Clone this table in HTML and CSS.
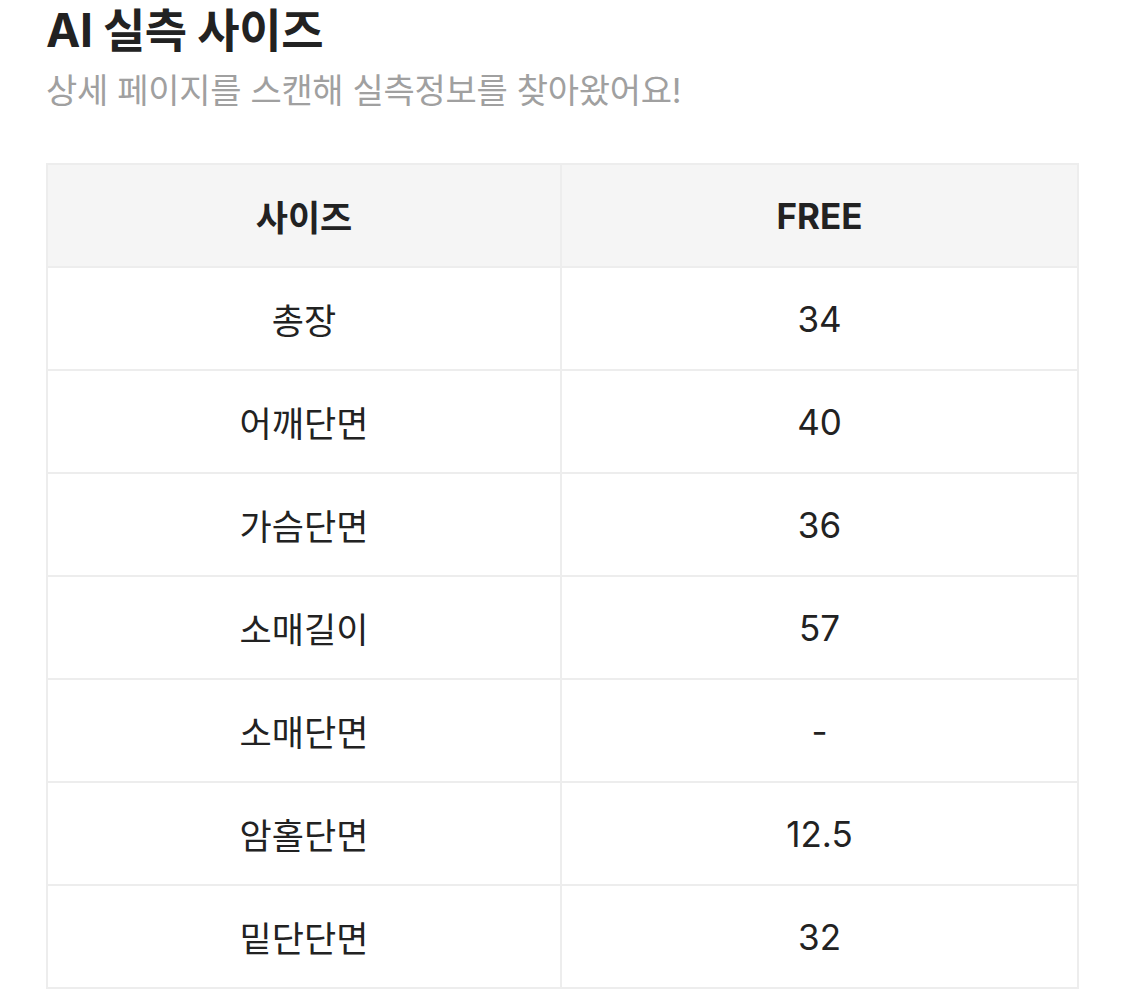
FILE: index.html
```html
<!DOCTYPE html>
<html lang="ko">
<head>
<meta charset="utf-8">
<link rel="stylesheet" href="styles.css">
</head>
<body>
<div class="page">
  <h1 class="title">AI 실측 사이즈</h1>
  <p class="subtitle">상세 페이지를 스캔해 실측정보를 찾아왔어요!</p>
  <table class="size-table">
    <colgroup>
      <col class="col-label">
      <col class="col-value">
    </colgroup>
    <thead>
      <tr><th>사이즈</th><th>FREE</th></tr>
    </thead>
    <tbody>
      <tr><td>총장</td><td>34</td></tr>
      <tr><td>어깨단면</td><td>40</td></tr>
      <tr><td>가슴단면</td><td>36</td></tr>
      <tr><td>소매길이</td><td>57</td></tr>
      <tr><td>소매단면</td><td>-</td></tr>
      <tr><td>암홀단면</td><td>12.5</td></tr>
      <tr><td>밑단단면</td><td>32</td></tr>
    </tbody>
  </table>
</div>
</body>
</html>
```

FILE: styles.css
```css
html, body {
  margin: 0;
  padding: 0;
  background: #ffffff;
}
body {
  font-family: "Inter", "Noto Sans CJK KR", sans-serif;
  color: #222222;
}
.page {
  padding: 2px 46px 0 46px;
}
.title {
  margin: 0;
  font-size: 46px;
  line-height: 56px;
  font-weight: 700;
  letter-spacing: -0.4px;
  color: #222222;
}
.subtitle {
  margin: 12px 0 0 0;
  font-size: 34px;
  line-height: 42px;
  font-weight: 400;
  letter-spacing: -0.3px;
  color: #a0a0a0;
}
.size-table {
  margin-top: 51px;
  width: 1033px;
  border-collapse: collapse;
  table-layout: fixed;
  border: 2px solid #ededed;
}
.col-label {
  width: 514px;
}
.size-table th,
.size-table td {
  border: 2px solid #ededed;
  height: 101px;
  padding: 0;
  text-align: center;
  vertical-align: middle;
  font-size: 35px;
  color: #222222;
}
.size-table th {
  background: #f5f5f5;
  font-weight: 700;
  height: 101px;
}
.size-table td {
  font-weight: 400;
}
```
